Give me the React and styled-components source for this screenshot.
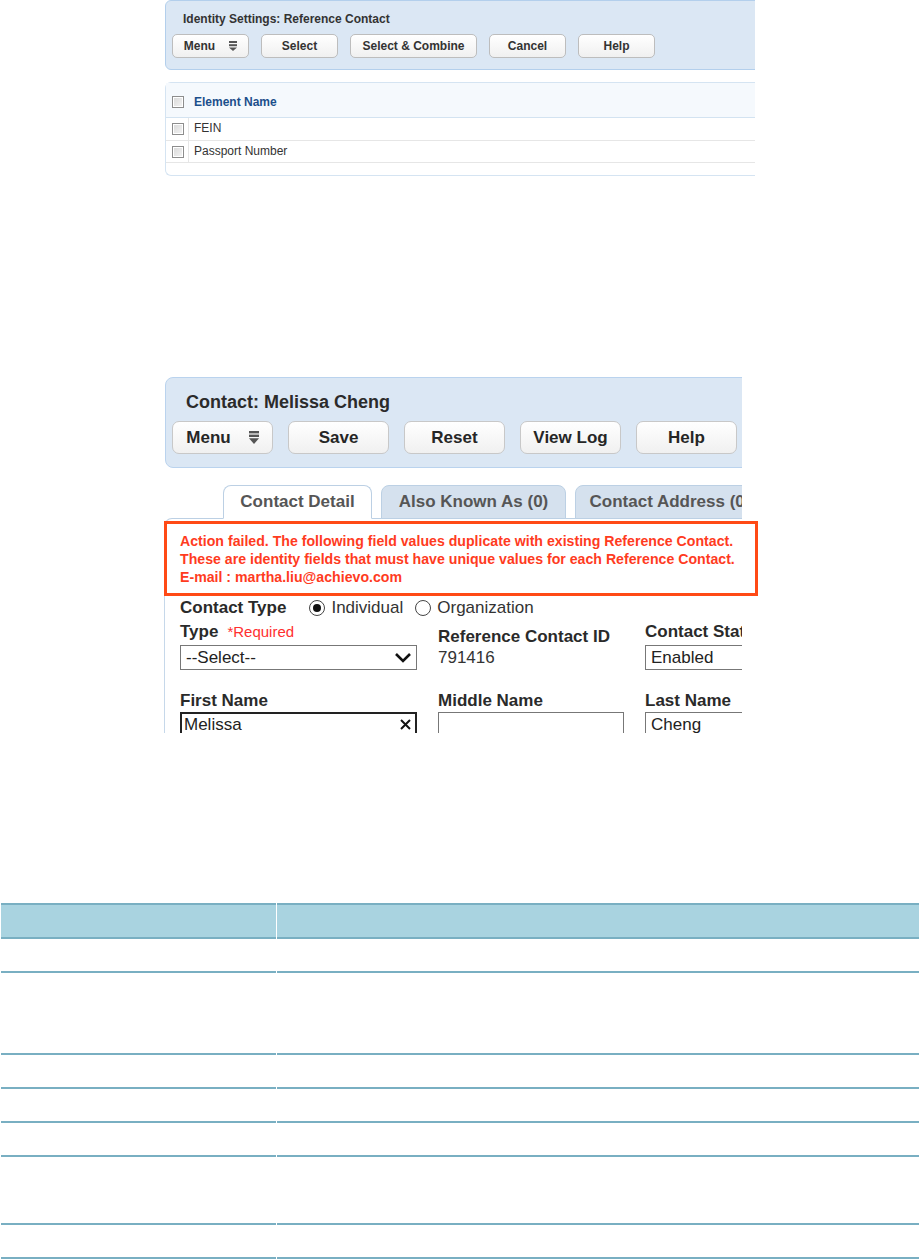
import React from 'react';
import styled, { createGlobalStyle } from 'styled-components';

const GlobalStyle = createGlobalStyle`
  html, body {
    margin: 0;
    padding: 0;
    background: #fff;
  }
  body {
    font-family: "Liberation Sans", Arial, sans-serif;
    color: #222;
  }
`;

const Page = styled.main`
  width: 920px;
  display: flex;
  flex-direction: column;
`;

// a pasted screenshot: fixed frame, whatever is outside is cut off
const Shot = styled.figure`
  position: relative;
  margin: ${p => p.$top || 0}px 0 0 ${p => p.$left}px;
  width: ${p => p.$width}px;
  height: ${p => p.$height}px;
`;

const Clip = styled.div`
  width: 100%;
  height: 100%;
  overflow: hidden;
  display: flex;
  flex-direction: column;
`;

const Toolbar = styled.section`
  flex: none;
  box-sizing: border-box;
  width: 660px;
  margin-left: ${p => (p.$big ? 1 : 0)}px;
  height: ${p => (p.$big ? 91 : 70)}px;
  padding: ${p => (p.$big ? '13px 0 0 6px' : '11px 0 0 6px')};
  background: #dbe7f4;
  border: 1px solid ${p => (p.$big ? '#bad3ee' : '#b3cfec')};
  border-radius: ${p => (p.$big ? 8 : 6)}px;
  display: flex;
  flex-direction: column;
  gap: 8px;
`;

const Title = styled.h1`
  margin: 0 0 0 ${p => (p.$big ? 14 : 11)}px;
  font-size: ${p => (p.$big ? 18 : 12)}px;
  line-height: ${p => (p.$big ? 22 : 14)}px;
  font-weight: bold;
  color: ${p => (p.$big ? '#2b2b2b' : '#333')};
`;

const ButtonRow = styled.div`
  display: flex;
  gap: ${p => p.$gap}px;
`;

const Button = styled.button`
  box-sizing: border-box;
  width: ${p => p.$w}px;
  height: ${p => (p.$big ? 33 : 24)}px;
  padding: 0;
  display: inline-flex;
  align-items: center;
  justify-content: center;
  gap: ${p => (p.$big ? 18 : 14)}px;
  border: 1px solid ${p => (p.$big ? '#c8c8c8' : '#bdbdbd')};
  border-radius: ${p => (p.$big ? 7 : 5)}px;
  background: linear-gradient(#ffffff, #f0f0f0);
  font-family: "Liberation Sans", Arial, sans-serif;
  font-weight: bold;
  font-size: ${p => (p.$big ? 17 : 12)}px;
  color: ${p => (p.$big ? '#262626' : '#333')};
`;

const MenuIcon = ({ big }) => {
  const w = big ? 10 : 8;
  const h = big ? 13 : 10;
  const b = big ? 2.4 : 2;
  return (
    <svg width={w} height={h} viewBox={`0 0 ${w} ${h}`}>
      <rect x="0" y="0" width={w} height={b} fill="#555" />
      <rect x="0" y={b + 1.2} width={w} height={b} fill="#555" />
      <polygon points={`0,${2 * b + 2.4} ${w},${2 * b + 2.4} ${w / 2},${h}`} fill="#555" />
    </svg>
  );
};

/* ---- first screenshot: element list ---- */

const Grid = styled.section`
  flex: none;
  margin-top: 12px;
  width: 660px;
  box-sizing: border-box;
  border: 1px solid #d5e4f2;
  border-right: none;
  border-radius: 6px 0 0 6px;
  display: flex;
  flex-direction: column;
  font-size: 12px;
`;

const GridHead = styled.div`
  height: 35px;
  box-sizing: border-box;
  background: #f5f9fd;
  border-bottom: 1px solid #d3e3f1;
  display: flex;
  align-items: center;
  padding: 3px 0 0 6px;
  gap: 10px;
  font-weight: bold;
  color: #1c4f8b;
`;

const GridRow = styled.div`
  height: ${p => p.$h}px;
  box-sizing: border-box;
  border-bottom: 1px solid #e6e6e6;
  display: flex;
  color: #333;
`;

const CheckCell = styled.div`
  width: 23px;
  border-right: 1px solid #e6e6e6;
  display: flex;
  align-items: center;
  padding-left: 6px;
  box-sizing: border-box;
`;

const NameCell = styled.div`
  display: flex;
  align-items: center;
  padding-left: 5px;
  padding-bottom: 2px;
`;

const Check = styled.span`
  display: block;
  width: 12px;
  height: 12px;
  box-sizing: border-box;
  border: 1px solid #8d8d8d;
  box-shadow: inset 0 0 0 1px #fff;
  background: linear-gradient(135deg, #d8d8d8, #f4f4f4);
`;

const GridFoot = styled.div`
  height: 12px;
`;

/* ---- second screenshot: contact form ---- */

const TabBar = styled.div`
  flex: none;
  margin-top: 17px;
  margin-bottom: -1px;
  padding-left: 59px;
  display: flex;
  gap: 9px;
  position: relative;
  z-index: 1;
`;

const Tab = styled.div`
  flex: none;
  box-sizing: border-box;
  width: ${p => p.$w}px;
  height: 34px;
  border: 1px solid #bcd0e4;
  border-bottom-color: ${p => (p.$active ? '#fff' : '#bcd0e4')};
  border-radius: 8px 8px 0 0;
  background: ${p => (p.$active ? '#fff' : '#d5e1ee')};
  display: flex;
  align-items: center;
  justify-content: center;
  font-size: 17px;
  font-weight: bold;
  color: #565656;
  white-space: nowrap;
`;

const Content = styled.div`
  flex: none;
  border-top: 1px solid #bcd0e4;
  border-left: 1px solid #c6d8ea;
  border-top-left-radius: 8px;
  padding-left: 15px;
  height: 300px;
`;

const ErrorText = styled.p`
  margin: 13px 0 0;
  font-size: 14.15px;
  line-height: 18px;
  font-weight: bold;
  color: #ff3b1e;
  white-space: nowrap;
`;

const TypeRow = styled.div`
  margin-top: 12px;
  height: 20px;
  display: flex;
  align-items: center;
  font-size: 17px;
  white-space: nowrap;
`;

const Label = styled.span`
  display: block;
  font-size: 17px;
  line-height: 20px;
  font-weight: bold;
  color: #2a2a2a;
  white-space: nowrap;
`;

const Required = styled.span`
  margin-left: 9px;
  font-size: 15px;
  font-weight: normal;
  color: #ff2f2f;
`;

const RadioOption = styled.label`
  display: flex;
  align-items: center;
  gap: 6px;
  margin-left: ${p => p.$gap}px;
  color: #333;
`;

const Radio = styled.span`
  width: 16px;
  height: 16px;
  box-sizing: border-box;
  border: 1px solid #444;
  border-radius: 50%;
  display: flex;
  align-items: center;
  justify-content: center;
  &::after {
    content: '';
    width: 8px;
    height: 8px;
    border-radius: 50%;
    background: ${p => (p.$on ? '#111' : 'transparent')};
  }
`;

const FieldGrid = styled.div`
  margin-top: 4px;
  display: grid;
  grid-template-columns: 237px 186px 200px;
  column-gap: 21px;
  row-gap: 21px;
`;

const Field = styled.div`
  padding-top: ${p => p.$drop || 0}px;
  display: flex;
  flex-direction: column;
  gap: ${p => (p.$tight ? 1 : 3)}px;
`;

const Value = styled.span`
  font-size: 17px;
  line-height: 20px;
  color: #333;
`;

const Box = styled.div`
  box-sizing: border-box;
  height: 25px;
  border: ${p => (p.$focus ? '2px solid #222' : '1px solid #777')};
  background: #fff;
  display: flex;
  align-items: center;
  justify-content: space-between;
  padding: 0 ${p => (p.$focus ? 3 : 4)}px 0 ${p => (p.$focus ? 2 : 5)}px;
  font-size: 17px;
  color: #222;
  white-space: nowrap;
`;

const Annotation = styled.div`
  position: absolute;
  left: 0;
  top: 144px;
  width: 594px;
  height: 75px;
  box-sizing: border-box;
  border: 3px solid #ff4a16;
  pointer-events: none;
`;

/* ---- empty layout table ---- */

const LayoutTable = styled.table`
  margin-top: 170px;
  width: 920px;
  border-collapse: separate;
  border-spacing: 1px 0;
  table-layout: fixed;
`;

const HeadCell = styled.th`
  box-sizing: border-box;
  height: 36px;
  padding: 0;
  background: #a9d3e0;
  border-top: 2px solid #79afc2;
  border-bottom: 2px solid #79afc2;
`;

const BodyCell = styled.td`
  box-sizing: border-box;
  height: ${p => p.$h + 2}px;
  padding: 0;
  border-bottom: 2px solid #79afc2;
`;

const rowHeights = [32, 80, 32, 32, 32, 66, 32];

export default function App() {
  return (
    <Page>
      <GlobalStyle />

      <Shot $left={165} $width={590} $height={177}>
        <Clip>
          <Toolbar>
            <Title>Identity Settings: Reference Contact</Title>
            <ButtonRow $gap={12}>
              <Button $w={77}>Menu <MenuIcon /></Button>
              <Button $w={77}>Select</Button>
              <Button $w={127}>Select &amp; Combine</Button>
              <Button $w={77}>Cancel</Button>
              <Button $w={77}>Help</Button>
            </ButtonRow>
          </Toolbar>
          <Grid>
            <GridHead><Check />Element Name</GridHead>
            <GridRow $h={23}>
              <CheckCell><Check /></CheckCell>
              <NameCell>FEIN</NameCell>
            </GridRow>
            <GridRow $h={22}>
              <CheckCell><Check /></CheckCell>
              <NameCell>Passport Number</NameCell>
            </GridRow>
            <GridFoot />
          </Grid>
        </Clip>
      </Shot>

      <Shot $left={164} $top={200} $width={578} $height={356}>
        <Clip>
          <Toolbar $big>
            <Title $big>Contact: Melissa Cheng</Title>
            <ButtonRow $gap={15}>
              <Button $big $w={101}>Menu <MenuIcon big /></Button>
              <Button $big $w={101}>Save</Button>
              <Button $big $w={101}>Reset</Button>
              <Button $big $w={101}>View Log</Button>
              <Button $big $w={101}>Help</Button>
            </ButtonRow>
          </Toolbar>
          <TabBar>
            <Tab $active $w={149}>Contact Detail</Tab>
            <Tab $w={185}>Also Known As (0)</Tab>
            <Tab $w={190}>Contact Address (0)</Tab>
          </TabBar>
          <Content>
            <ErrorText>
              Action failed. The following field values duplicate with existing Reference Contact.<br />
              These are identity fields that must have unique values for each Reference Contact.<br />
              E-mail : martha.liu@achievo.com
            </ErrorText>
            <TypeRow>
              <Label>Contact Type</Label>
              <RadioOption $gap={23}><Radio $on />Individual</RadioOption>
              <RadioOption $gap={12}><Radio />Organization</RadioOption>
            </TypeRow>
            <FieldGrid>
              <Field>
                <Label>Type<Required>*Required</Required></Label>
                <Box>
                  --Select--
                  <svg width="18" height="11" viewBox="0 0 18 11">
                    <polyline points="2,2 9,9 16,2" fill="none" stroke="#111" strokeWidth="2.6" />
                  </svg>
                </Box>
              </Field>
              <Field $drop={5} $tight>
                <Label>Reference Contact ID</Label>
                <Value>791416</Value>
              </Field>
              <Field>
                <Label>Contact Status</Label>
                <Box>Enabled</Box>
              </Field>
              <Field $tight>
                <Label>First Name</Label>
                <Box $focus>
                  Melissa
                  <svg width="13" height="13" viewBox="0 0 13 13">
                    <path d="M2 2 L11 11 M11 2 L2 11" stroke="#111" strokeWidth="2" />
                  </svg>
                </Box>
              </Field>
              <Field $tight>
                <Label>Middle Name</Label>
                <Box />
              </Field>
              <Field $tight>
                <Label>Last Name</Label>
                <Box>Cheng</Box>
              </Field>
            </FieldGrid>
          </Content>
        </Clip>
        <Annotation />
      </Shot>

      <LayoutTable>
        <colgroup>
          <col style={{ width: 275 }} />
          <col />
        </colgroup>
        <thead>
          <tr>
            <HeadCell />
            <HeadCell />
          </tr>
        </thead>
        <tbody>
          {rowHeights.map((h, i) => (
            <tr key={i}>
              <BodyCell $h={h} />
              <BodyCell $h={h} />
            </tr>
          ))}
        </tbody>
      </LayoutTable>
    </Page>
  );
}
